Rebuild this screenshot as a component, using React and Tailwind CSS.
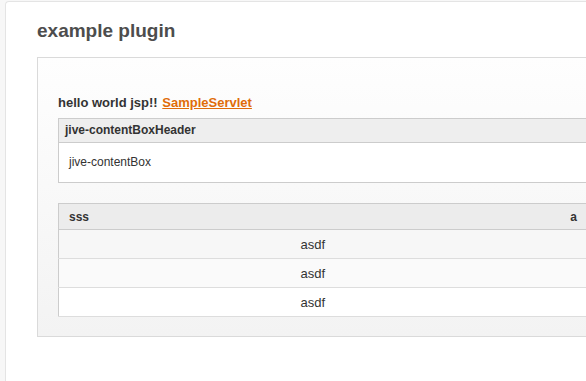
import React from "react";

const rows = ["asdf", "asdf", "asdf"];
const rowBg = ["bg-[#f7f7f7]", "bg-[#fafafa]", "bg-white"];

export default function App() {
  return (
    <div className="w-[586px] h-[381px] overflow-hidden bg-[#f7f7f7] font-['Liberation_Sans',Arial,sans-serif] text-[#333]">
      <div className="ml-[5px] mt-[1px] h-[380px] w-[700px] bg-white border-t border-l border-[#e4e4e4] rounded-tl-[4px] pl-[31px] pt-[18px]">
        <h1 className="text-[19px] leading-[22px] font-bold text-[#4d4d4d]">
          example plugin
        </h1>

        {/* ===== PANEL ===== */}
        <div className="mt-[15px] w-[572px] border border-[#dadada] bg-linear-to-b from-[#fefefe] to-[#f3f3f3] px-[20px] pt-[37px] pb-[19px]">
          <p className="text-[13px] leading-[16px] font-bold text-[#333]">
            hello world jsp!!{" "}
            <a href="#" className="ml-[1px] text-[#e06c0a] underline">
              SampleServlet
            </a>
          </p>

          {/* content box */}
          <div className="mt-[7px] border border-[#cccccc] bg-white">
            <div className="h-[24px] leading-[23px] bg-[#eeeeee] border-b border-[#cccccc] px-[6px] text-[12px] font-bold">
              jive-contentBoxHeader
            </div>
            <div className="h-[39px] leading-[39px] px-[10px] text-[12px]">
              jive-contentBox
            </div>
          </div>

          {/* table */}
          <table className="mt-[20px] w-[530px] border-collapse border border-[#cccccc]">
            <thead>
              <tr className="bg-[#ececec] border-b border-[#cccccc]">
                <th className="h-[26px] p-0 pl-[10px] text-left text-[12px] leading-[14px] font-bold">
                  sss
                </th>
                <th className="h-[26px] w-[21px] p-0 pr-[10px] text-right text-[12px] leading-[14px] font-bold">
                  a
                </th>
              </tr>
            </thead>
            <tbody>
              {rows.map((r, i) => (
                <tr key={i} className={`${rowBg[i]} border-b border-[#dddddd]`}>
                  <td className="h-[29px] p-0 text-center text-[13px] leading-[15px]">
                    {r}
                  </td>
                  <td className="p-0"></td>
                </tr>
              ))}
            </tbody>
          </table>
        </div>
      </div>
    </div>
  );
}
